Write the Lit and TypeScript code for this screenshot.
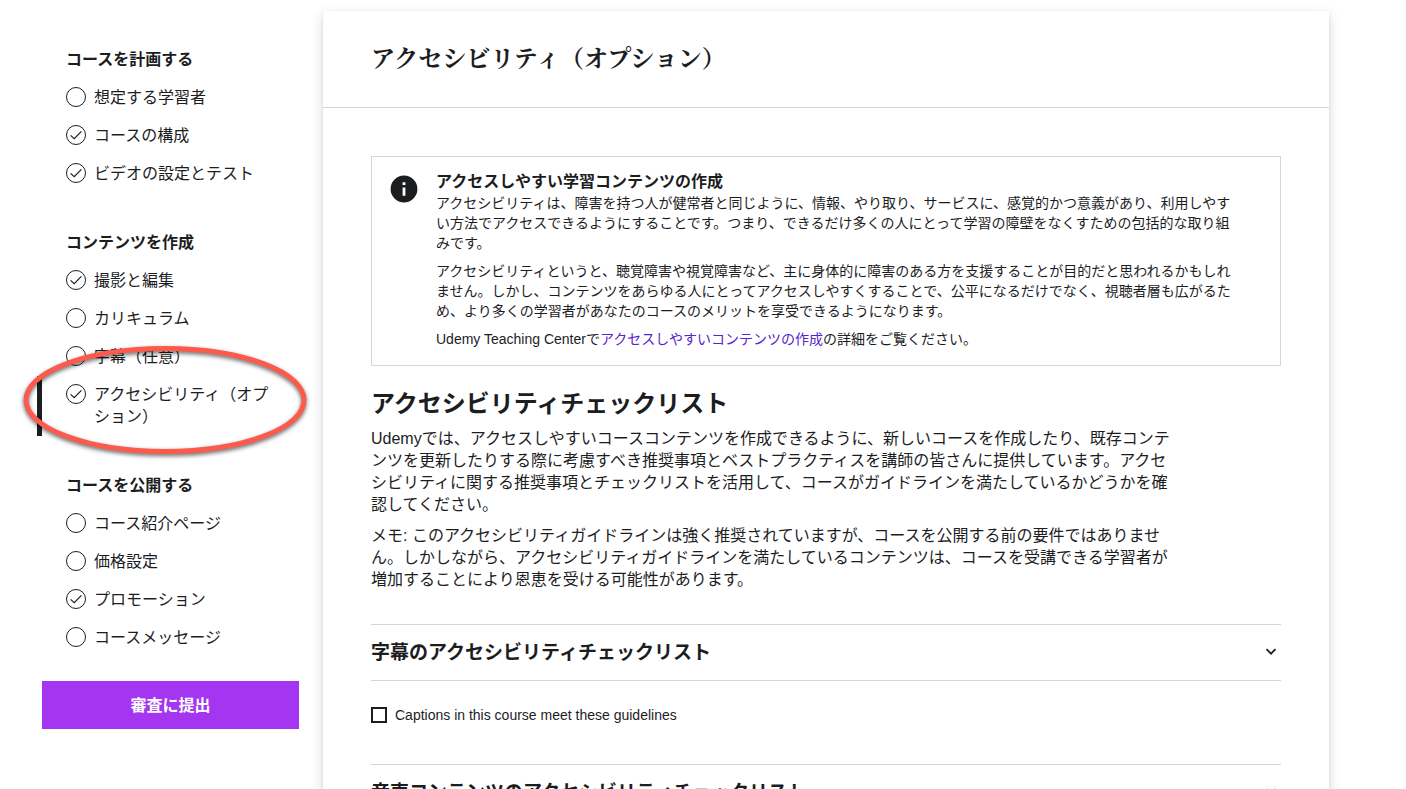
import { LitElement, html, svg, css, nothing } from "lit";
import { customElement, property } from "lit/decorators.js";
import { classMap } from "lit/directives/class-map.js";

interface Step {
  label: string;
  done: boolean;
  current?: boolean;
}

interface StepGroup {
  title: string;
  steps: Step[];
}

const GROUPS: StepGroup[] = [
  {
    title: "コースを計画する",
    steps: [
      { label: "想定する学習者", done: false },
      { label: "コースの構成", done: true },
      { label: "ビデオの設定とテスト", done: true },
    ],
  },
  {
    title: "コンテンツを作成",
    steps: [
      { label: "撮影と編集", done: true },
      { label: "カリキュラム", done: false },
      { label: "字幕（任意）", done: false },
      { label: "アクセシビリティ（オプション）", done: true, current: true },
    ],
  },
  {
    title: "コースを公開する",
    steps: [
      { label: "コース紹介ページ", done: false },
      { label: "価格設定", done: false },
      { label: "プロモーション", done: true },
      { label: "コースメッセージ", done: false },
    ],
  },
];

@customElement("course-nav")
export class CourseNav extends LitElement {
  static styles = css`
    :host {
      display: block;
    }
    .title {
      margin: 0;
      padding: 0 29px;
      font-size: 16px;
      line-height: 22px;
      font-weight: 700;
    }
    .list {
      list-style: none;
      margin: 8px 0 39px;
      padding: 0;
    }
    .item {
      position: relative;
    }
    .step {
      display: flex;
      align-items: flex-start;
      gap: 8px;
      padding: 8px 24px;
      border-left: 5px solid transparent;
      color: inherit;
      text-decoration: none;
      font-size: 16px;
      line-height: 22px;
    }
    .step.current {
      border-left-color: #1c1d1f;
    }
    .mark {
      flex: none;
      width: 20px;
      height: 20px;
    }
    .ring {
      position: absolute;
      left: -18px;
      top: -36px;
      width: 292px;
      height: 120px;
      pointer-events: none;
      z-index: 1;
      filter: drop-shadow(0 2px 2px rgba(0, 0, 0, 0.6));
    }
    .submit {
      display: block;
      width: calc(100% - 5px);
      height: 48px;
      margin: -15px 0 0 5px;
      padding: 0 0 2px;
      border: 0;
      background: #a435f0;
      color: #fff;
      font: inherit;
      font-size: 16px;
      font-weight: 700;
      cursor: pointer;
    }
  `;

  private renderStep(step: Step) {
    return html`<li class="item">
      <a
        class=${classMap({ step: true, current: !!step.current })}
        href="#"
        aria-current=${step.current ? "page" : nothing}
      >
        <svg class="mark" viewBox="0 0 20 20" fill="none" stroke="#1c1d1f" aria-hidden="true">
          <circle cx="10" cy="10" r="9.5"></circle>
          ${step.done
            ? svg`<path d="M4.6 10.4 8.2 13.7 15.4 6.3" stroke-width="1.2"></path>`
            : nothing}
        </svg>
        <span>${step.label}</span>
      </a>
      ${step.current
        ? html`<svg class="ring" viewBox="0 0 292 120" aria-hidden="true">
            <ellipse
              cx="146"
              cy="60"
              rx="139"
              ry="51.5"
              fill="none"
              stroke="#fc5a4c"
              stroke-width="5"
            ></ellipse>
          </svg>`
        : nothing}
    </li>`;
  }

  render() {
    return html`<nav>
      ${GROUPS.map(
        (group) => html`<h2 class="title">${group.title}</h2>
          <ul class="list">
            ${group.steps.map((step) => this.renderStep(step))}
          </ul>`
      )}
      <button class="submit" type="button">審査に提出</button>
    </nav>`;
  }
}

@customElement("checklist-section")
export class ChecklistSection extends LitElement {
  static styles = css`
    :host {
      display: block;
      border-top: 1px solid #d1d7dc;
    }
    .heading {
      margin: 0;
      border-bottom: 1px solid #d1d7dc;
    }
    .toggle {
      display: flex;
      align-items: center;
      justify-content: space-between;
      width: 100%;
      padding: 14px 0;
      border: 0;
      background: none;
      color: inherit;
      font: inherit;
      font-size: 19px;
      line-height: 27px;
      font-weight: 700;
      text-align: left;
      cursor: pointer;
    }
    .chevron {
      flex: none;
      width: 20px;
      height: 20px;
    }
    .body {
      padding: 24px 0 39px;
    }
    .check {
      display: flex;
      align-items: center;
      gap: 8px;
      font-size: 14px;
      line-height: 20px;
    }
    .box {
      appearance: none;
      flex: none;
      box-sizing: border-box;
      width: 16px;
      height: 16px;
      margin: 0;
      border: 2px solid #1c1d1f;
      background: #fff;
    }
    .box:checked {
      background: #1c1d1f;
    }
  `;

  @property() heading = "";
  @property() confirm = "";

  render() {
    return html`<h3 class="heading">
        <button class="toggle" type="button">
          <span>${this.heading}</span>
          <svg class="chevron" viewBox="0 0 20 20" fill="none" stroke="#1c1d1f" stroke-width="1.8" aria-hidden="true">
            <path d="M5.5 6.2 10 10.7 14.5 6.2"></path>
          </svg>
        </button>
      </h3>
      <div class="body">
        ${this.confirm
          ? html`<label class="check"><input class="box" type="checkbox" /><span>${this.confirm}</span></label>`
          : nothing}
      </div>`;
  }
}

@customElement("app-root")
export class AppRoot extends LitElement {
  static styles = css`
    :host {
      display: block;
      min-height: 100vh;
      background: #fff;
      color: #1c1d1f;
      font-family: "Liberation Sans", "Noto Sans CJK JP", sans-serif;
    }
    .page {
      display: grid;
      grid-template-columns: 262px minmax(0, 1fr);
      gap: 24px;
      align-items: start;
      padding: 11px 77px 48px 37px;
    }
    .nav {
      padding-top: 38px;
    }
    .card {
      background: #fff;
      box-shadow: 0 2px 4px rgba(0, 0, 0, 0.08), 0 4px 12px rgba(0, 0, 0, 0.14);
    }
    .header {
      padding: 30px 48px 34px;
      border-bottom: 1px solid #d1d7dc;
    }
    .page-title {
      margin: 0;
      font-family: "Noto Serif CJK JP", "Noto Sans CJK JP", serif;
      font-size: 24px;
      line-height: 32px;
      font-weight: 700;
    }
    .content {
      padding: 48px;
    }
    .notice {
      display: flex;
      align-items: flex-start;
      gap: 16px;
      padding: 16px;
      border: 1px solid #d1d7dc;
    }
    .info {
      flex: none;
      width: 32px;
      height: 32px;
    }
    .notice-text {
      max-width: 800px;
      font-size: 14px;
      line-height: 20px;
    }
    .notice-title {
      margin: 0 0 2px;
      font-size: 16px;
      line-height: 18px;
      font-weight: 700;
    }
    p {
      margin: 0 0 8px;
    }
    p:last-child {
      margin-bottom: 0;
    }
    .link {
      color: #5624d0;
      text-decoration: none;
    }
    .subtitle {
      margin: 22px 0 8px;
      font-size: 24px;
      line-height: 32px;
      font-weight: 700;
    }
    .intro {
      display: grid;
      gap: 9px;
      max-width: 808px;
      margin-bottom: 33px;
      font-size: 16px;
      line-height: 22px;
    }
    .intro p {
      margin: 0;
    }
  `;

  render() {
    return html`<div class="page">
      <course-nav class="nav"></course-nav>
      <main class="card">
        <header class="header">
          <h1 class="page-title">アクセシビリティ（オプション）</h1>
        </header>
        <div class="content">
          <section class="notice">
            <svg class="info" viewBox="0 0 32 32" aria-hidden="true">
              <circle cx="16" cy="16" r="13.4" fill="#1c1d1f"></circle>
              <path d="M14.6 9.3h2.8v2.7h-2.8zM14.6 14.6h2.8v8.2h-2.8z" fill="#fff"></path>
            </svg>
            <div class="notice-text">
              <h2 class="notice-title">アクセスしやすい学習コンテンツの作成</h2>
              <p>アクセシビリティは、障害を持つ人が健常者と同じように、情報、やり取り、サービスに、感覚的かつ意義があり、利用しやすい方法でアクセスできるようにすることです。つまり、できるだけ多くの人にとって学習の障壁をなくすための包括的な取り組みです。</p>
              <p>アクセシビリティというと、聴覚障害や視覚障害など、主に身体的に障害のある方を支援することが目的だと思われるかもしれません。しかし、コンテンツをあらゆる人にとってアクセスしやすくすることで、公平になるだけでなく、視聴者層も広がるため、より多くの学習者があなたのコースのメリットを享受できるようになります。</p>
              <p>Udemy Teaching Centerで<a class="link" href="#">アクセスしやすいコンテンツの作成</a>の詳細をご覧ください。</p>
            </div>
          </section>
          <h2 class="subtitle">アクセシビリティチェックリスト</h2>
          <div class="intro">
            <p>Udemyでは、アクセスしやすいコースコンテンツを作成できるように、新しいコースを作成したり、既存コンテンツを更新したりする際に考慮すべき推奨事項とベストプラクティスを講師の皆さんに提供しています。アクセシビリティに関する推奨事項とチェックリストを活用して、コースがガイドラインを満たしているかどうかを確認してください。</p>
            <p>メモ: このアクセシビリティガイドラインは強く推奨されていますが、コースを公開する前の要件ではありません。しかしながら、アクセシビリティガイドラインを満たしているコンテンツは、コースを受講できる学習者が増加することにより恩恵を受ける可能性があります。</p>
          </div>
          <checklist-section
            heading="字幕のアクセシビリティチェックリスト"
            confirm="Captions in this course meet these guidelines"
          ></checklist-section>
          <checklist-section heading="音声コンテンツのアクセシビリティチェックリスト"></checklist-section>
        </div>
      </main>
    </div>`;
  }
}
